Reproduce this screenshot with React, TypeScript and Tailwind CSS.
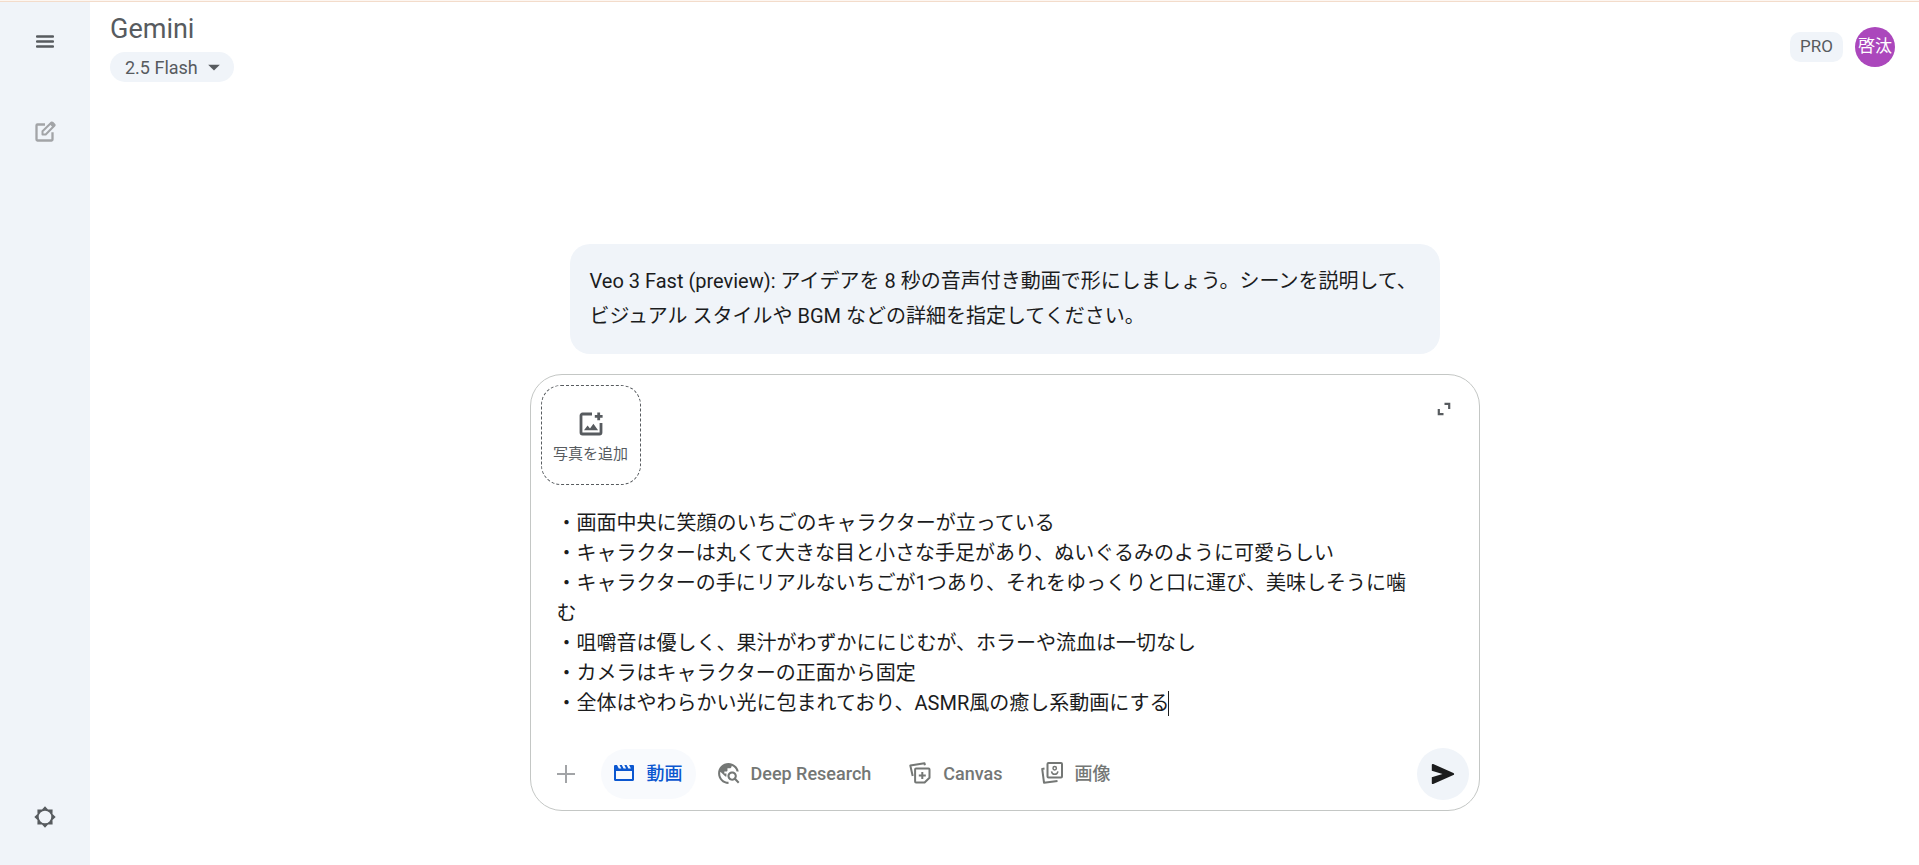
import { useState } from 'react';
import { MdTravelExplore, MdArrowDropDown } from 'react-icons/md';

const initialPrompt = [
  '・画面中央に笑顔のいちごのキャラクターが立っている',
  '・キャラクターは丸くて大きな目と小さな手足があり、ぬいぐるみのように可愛らしい',
  '・キャラクターの手にリアルないちごが1つあり、それをゆっくりと口に運び、美味しそうに噛む',
  '・咀嚼音は優しく、果汁がわずかににじむが、ホラーや流血は一切なし',
  '・カメラはキャラクターの正面から固定',
  '・全体はやわらかい光に包まれており、ASMR風の癒し系動画にする',
].join('\n');

function MenuIcon() {
  return (
    <svg width="18" height="14" viewBox="0 0 18 14" fill="none" stroke="currentColor" strokeWidth="2.4" strokeLinecap="round">
      <path d="M1 1.5h16M1 6.500h16M1 11.500h16" />
    </svg>
  );
}

function EditIcon() {
  return (
    <svg width="22" height="22" viewBox="0 0 22 22" fill="none" stroke="currentColor" strokeWidth="2.300" strokeLinejoin="round">
      <path d="M11 3.500H3.400a.9.9 0 0 0-.9.9v14.200c0 .5.4.9.9.9h14.200c.5 0 .9-.4.9-.9v-7.300" />
      <path d="M8.500 13.500v-3.200L17.500 1.500l3 3L11.700 13.500H8.500z" strokeWidth="2" />
      <path d="M15.500 3l3.400 3.500 2.300-1.900c.5-.5.5-1.200 0-1.700L19.300 1c-.5-.5-1.200-.5-1.700 0L15.500 3z" fill="currentColor" stroke="none" />
    </svg>
  );
}

function SettingsIcon() {
  return (
    <svg width="22" height="22" viewBox="0 0 22 22" fill="currentColor" fillRule="evenodd">
      <path d="M11 .3l3 3.200 4.600-.1-.1 4.600 3.200 3-3.200 3 .1 4.600-4.600-.1-3 3.200-3-3.200-4.600.1.1-4.600L.3 11l3.200-3-.1-4.600 4.600.1L11 .3zM11 4.700a6.300 6.300 0 1 0 0 12.600 6.300 6.300 0 0 0 0-12.600z" />
    </svg>
  );
}

function AddPhotoIcon() {
  return (
    <svg width="24" height="24" viewBox="0 0 24 24" fill="none" stroke="currentColor" strokeWidth="2.800">
      <path d="M13 2H3.500C2.700 2 2 2.700 2 3.500v17c0 .8.7 1.500 1.500 1.500h17c.8 0 1.500-.7 1.500-1.500V11" />
      <path d="M19.700.5v7.800M15.800 4.400h7.800" />
      <path d="M5 18.300l3.600-4.900 2.400 3 3.400-4.600 4.700 6.500H5z" fill="currentColor" stroke="none" />
    </svg>
  );
}

function ExpandIcon() {
  return (
    <svg width="14" height="14" viewBox="0 0 14 14" fill="none" stroke="currentColor" strokeWidth="2.200">
      <path d="M7.500 1.800h4.700V7M1.800 7v5.200h4.700" />
    </svg>
  );
}

function PlusIcon() {
  return (
    <svg width="18" height="18" viewBox="0 0 18 18" fill="none" stroke="currentColor" strokeWidth="2">
      <path d="M9 0v18M0 9h18" />
    </svg>
  );
}

function VideoIcon() {
  return (
    <svg width="22" height="22" viewBox="0 0 22 22" fill="currentColor" fillRule="evenodd">
      <path d="M2.500 3H4l1.800 3.500h2.500L6.500 3H8.800l1.800 3.500h2.500L11.300 3h2.300l1.800 3.500h2.500L16.100 3h3.700c.8 0 1.200.5 1.200 1.200v13.600c0 .7-.5 1.200-1.200 1.200H2.200C1.500 19 1 18.500 1 17.800V4.200C1 3.500 1.600 3 2.500 3zM3 9v8h16V9H3z" />
    </svg>
  );
}

function CanvasIcon() {
  return (
    <svg width="22" height="22" viewBox="0 0 22 22" fill="none" stroke="currentColor" strokeWidth="2" strokeLinejoin="round">
      <path d="M3.700 14L1.300 3.500 15.500 1.200l.4 2" />
      <path d="M7 6.500h12.600c.5 0 .9.4.9.9v8.300l-4.900 4.800H7c-.5 0-.9-.4-.9-.9V7.400c0-.5.400-.9.900-.9z" />
      <path d="M13.300 10v7M9.800 13.500h7" />
    </svg>
  );
}

function ImageIcon() {
  return (
    <svg width="22" height="22" viewBox="0 0 22 22" fill="none" stroke="currentColor" strokeWidth="2" strokeLinejoin="round">
      <rect x="6.500" y="1" width="14.500" height="14.500" rx="1" />
      <path d="M3.500 6.500l-2.300.4L3 20.700l13.500-1.800" />
      <circle cx="13.700" cy="6.300" r="1.700" strokeWidth="1.500" />
      <path d="M10.500 9.300c.3 2 1.500 3 3.200 3s2.900-1 3.200-3" strokeWidth="1.500" />
    </svg>
  );
}

function SendIcon() {
  return (
    <svg width="24" height="22" viewBox="0 0 24 22" fill="currentColor">
      <path d="M.8 1.800C.8 1 1.500.7 2.200 1l20.200 8.900c1 .5 1 1.700 0 2.200L2.200 21c-.7.300-1.400 0-1.400-.8V14.300L11.500 11 .8 7.700V1.800z" />
    </svg>
  );
}

const tools = [
  { label: '動画', icon: <VideoIcon /> },
  { label: 'Deep Research', icon: <MdTravelExplore size={25} className="-mx-0.5" /> },
  { label: 'Canvas', icon: <CanvasIcon /> },
  { label: '画像', icon: <ImageIcon /> },
];

export default function App() {
  const [prompt, setPrompt] = useState(initialPrompt);
  const [selectedTool, setSelectedTool] = useState('動画');

  return (
    <div lang="ja" className="flex min-h-screen flex-col bg-white font-['Roboto','Noto_Sans_CJK_JP',sans-serif] text-[#1b1c1d]">
      <div className="h-0.5 border-b border-[#f3dccb] bg-[#fdf6f1]" />

      <div className="flex flex-1">
        {/* Sidebar */}
        <nav className="flex w-[90px] shrink-0 flex-col items-center bg-[#f0f4f9] pt-5 pb-7 text-[#575b5f]">
          <button aria-label="メニュー" className="flex size-10 items-center justify-center">
            <MenuIcon />
          </button>
          <button aria-label="新しいチャット" className="mt-[50px] flex size-10 items-center justify-center text-[#a2a4a7]">
            <EditIcon />
          </button>
          <button aria-label="設定" className="mt-auto flex size-10 items-center justify-center">
            <SettingsIcon />
          </button>
        </nav>

        <div className="flex min-w-0 flex-1 flex-col">
          {/* Header */}
          <header className="flex items-start justify-between pt-2 pr-6 pl-5 text-[#575b5f]">
            <div>
              <h1 className="text-[27px] leading-[38px]">Gemini</h1>
              <button className="mt-1 flex h-[30px] items-center rounded-full bg-[#f0f4f9] pr-1.5 pl-[15px] text-[18px]">
                2.5 Flash
                <MdArrowDropDown size={28} className="ml-0.5" />
              </button>
            </div>
            <div className="mt-[17px] flex items-center gap-3">
              <span className="flex h-[30px] items-center rounded-[10px] bg-[#f0f4f9] px-2.5 text-[17px]">PRO</span>
              <button className="flex size-10 items-center justify-center rounded-full bg-[#ab47bc] text-[17px] text-white">啓汰</button>
            </div>
          </header>

          {/* Conversation */}
          <main className="mx-auto mt-auto w-full max-w-[950px] pb-[54px]">
            <p className="mx-10 rounded-[20px] bg-[#f0f4f9] p-5 text-xl leading-[35px]">
              Veo 3 Fast (preview): アイデアを 8 秒の音声付き動画で形にしましょう。シーンを説明して、
              <br />
              ビジュアル スタイルや BGM などの詳細を指定してください。
            </p>

            <div className="mt-5 rounded-[32px] border border-[#c4c7c5] p-2.5">
              <div className="flex items-start justify-between">
                <button className="flex size-[100px] flex-col items-center justify-center gap-2 rounded-[20px] border border-dashed border-[#575b5f] pt-1.5 text-[15px] leading-5 text-[#575b5f]">
                  <AddPhotoIcon />
                  写真を追加
                </button>
                <button aria-label="全画面表示" className="mt-1 mr-[5px] flex size-10 items-center justify-center text-[#575b5f]">
                  <ExpandIcon />
                </button>
              </div>

              <div className="relative mt-[23px] pr-[60px] pl-4">
                <textarea
                  aria-label="プロンプト"
                  rows={7}
                  value={prompt}
                  onChange={(e) => setPrompt(e.target.value)}
                  className="block w-full resize-none overflow-hidden text-xl leading-[30px] outline-none"
                />
                {/* Text caret */}
                <span className="absolute bottom-0.5 left-[627px] h-[25px] w-px bg-[#1b1c1d]" />
              </div>

              <div className="mt-[30px] flex items-center">
                <button aria-label="追加" className="flex size-[50px] items-center justify-center text-[#a2a4a7]">
                  <PlusIcon />
                </button>
                <div className="ml-2.5 flex">
                  {tools.map((tool) => (
                    <button
                      key={tool.label}
                      onClick={() => setSelectedTool(tool.label)}
                      className={
                        selectedTool === tool.label
                          ? 'mr-2.5 flex h-[50px] items-center gap-3 rounded-full bg-[#f8fafd] pr-[13px] pb-0.5 pl-3 text-[18px] font-medium text-[#0b57d0]'
                          : 'flex h-[50px] items-center gap-3 rounded-full pr-[26px] pb-0.5 pl-3 text-[18px] font-medium text-[#747775]'
                      }
                    >
                      {tool.icon}
                      {tool.label}
                    </button>
                  ))}
                </div>
                <button aria-label="送信" className="ml-auto flex size-[52px] items-center justify-center rounded-full bg-[#f0f4f9]">
                  <SendIcon />
                </button>
              </div>
            </div>
          </main>
        </div>
      </div>
    </div>
  );
}
